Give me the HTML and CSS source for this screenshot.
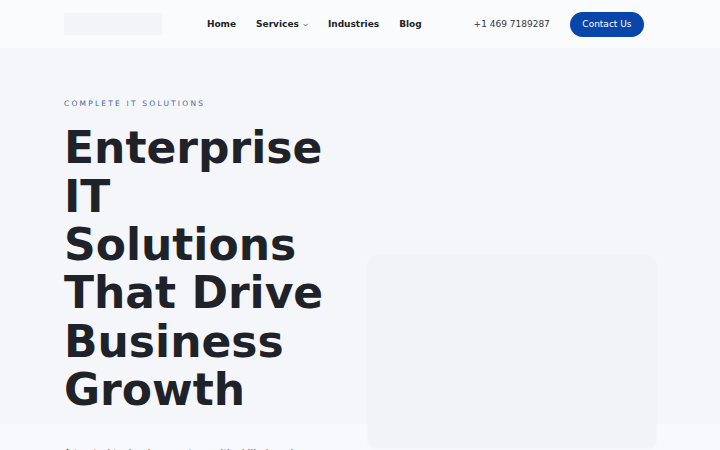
FILE: index.html
```html
<!DOCTYPE html>
<html lang="en">
<head>
<meta charset="utf-8">
<title>Enterprise IT Solutions</title>
<link rel="stylesheet" href="styles.css">
</head>
<body>
<header class="site-header">
  <div class="logo" aria-label="Logo"></div>
  <nav class="main-nav">
    <a href="#" class="nav-link">Home</a>
    <a href="#" class="nav-link has-sub">Services
      <svg class="chev" width="5" height="4" viewBox="0 0 5 4" aria-hidden="true"><path d="M0.4 0.8 L2.5 3 L4.6 0.8" fill="none" stroke="#555" stroke-width="0.8"/></svg>
    </a>
    <a href="#" class="nav-link">Industries</a>
    <a href="#" class="nav-link">Blog</a>
  </nav>
  <div class="header-actions">
    <a href="#" class="phone">+1 469 7189287</a>
    <a href="#" class="btn-contact">Contact Us</a>
  </div>
</header>
<main class="hero">
  <div class="hero-inner">
    <div class="hero-copy">
      <p class="eyebrow">COMPLETE IT SOLUTIONS</p>
      <h1 class="hero-title">Enterprise IT Solutions That Drive Business Growth</h1>
      <p class="hero-text">A trusted technology partner with skilled engineers delivering managed IT, cloud and cybersecurity services for modern enterprises.</p>
    </div>
    <div class="hero-visual"></div>
  </div>
</main>
</body>
</html>
```
FILE: styles.css
```css
* { box-sizing: border-box; }
html, body { margin: 0; padding: 0; }
body {
  font-family: "DejaVu Sans", "Liberation Sans", sans-serif;
  background: #f8f9fc;
  color: #1f2329;
  overflow: hidden;
}
a { text-decoration: none; color: inherit; }

.site-header {
  height: 48px;
  display: flex;
  align-items: center;
  justify-content: space-between;
  padding: 0 76px 0 64px;
  background: #fafbfd;
}
.logo {
  width: 98px;
  height: 22px;
  background: #f3f4f7;
  border-radius: 2px;
}
.main-nav {
  display: flex;
  align-items: center;
  gap: 20px;
  margin-right: 7px;
}
.nav-link {
  font-size: 9px;
  font-weight: 700;
  color: #202328;
  display: flex;
  align-items: center;
  gap: 4px;
}
.chev { display: block; margin-top: 1px; }
.header-actions {
  display: flex;
  align-items: center;
  gap: 20px;
}
.phone {
  font-size: 9px;
  color: #33363b;
}
.btn-contact {
  display: flex;
  align-items: center;
  height: 25px;
  padding: 0 12.5px;
  border-radius: 13px;
  background: #0846a9;
  color: #ffffff;
  font-size: 9px;
}

.hero {
  background: linear-gradient(to bottom, #f4f6fa 0, #f4f6fa 376px, #f8f9fc 376px);
  min-height: 402px;
}
.hero-inner {
  display: grid;
  grid-template-columns: 280px 288px;
  gap: 24px;
  padding: 50px 64px 0 64px;
  align-items: start;
}
.eyebrow {
  margin: 0;
  font-size: 7.5px;
  line-height: 1.5;
  letter-spacing: 2.2px;
  color: #4a6795;
}
.hero-title {
  margin: 15px 0 0 0;
  font-size: 44px;
  line-height: 1.1;
  font-weight: 700;
  color: #1f2329;
}
.hero-text {
  margin: 30px 0 0 0;
  font-size: 10px;
  line-height: 1.7;
  color: #4b5260;
}
.hero-visual {
  margin-top: 158px;
  height: 192px;
  border-radius: 8px;
  background: #f1f3f7;
  box-shadow: 0 0 3px rgba(30, 40, 60, 0.04);
}
```
